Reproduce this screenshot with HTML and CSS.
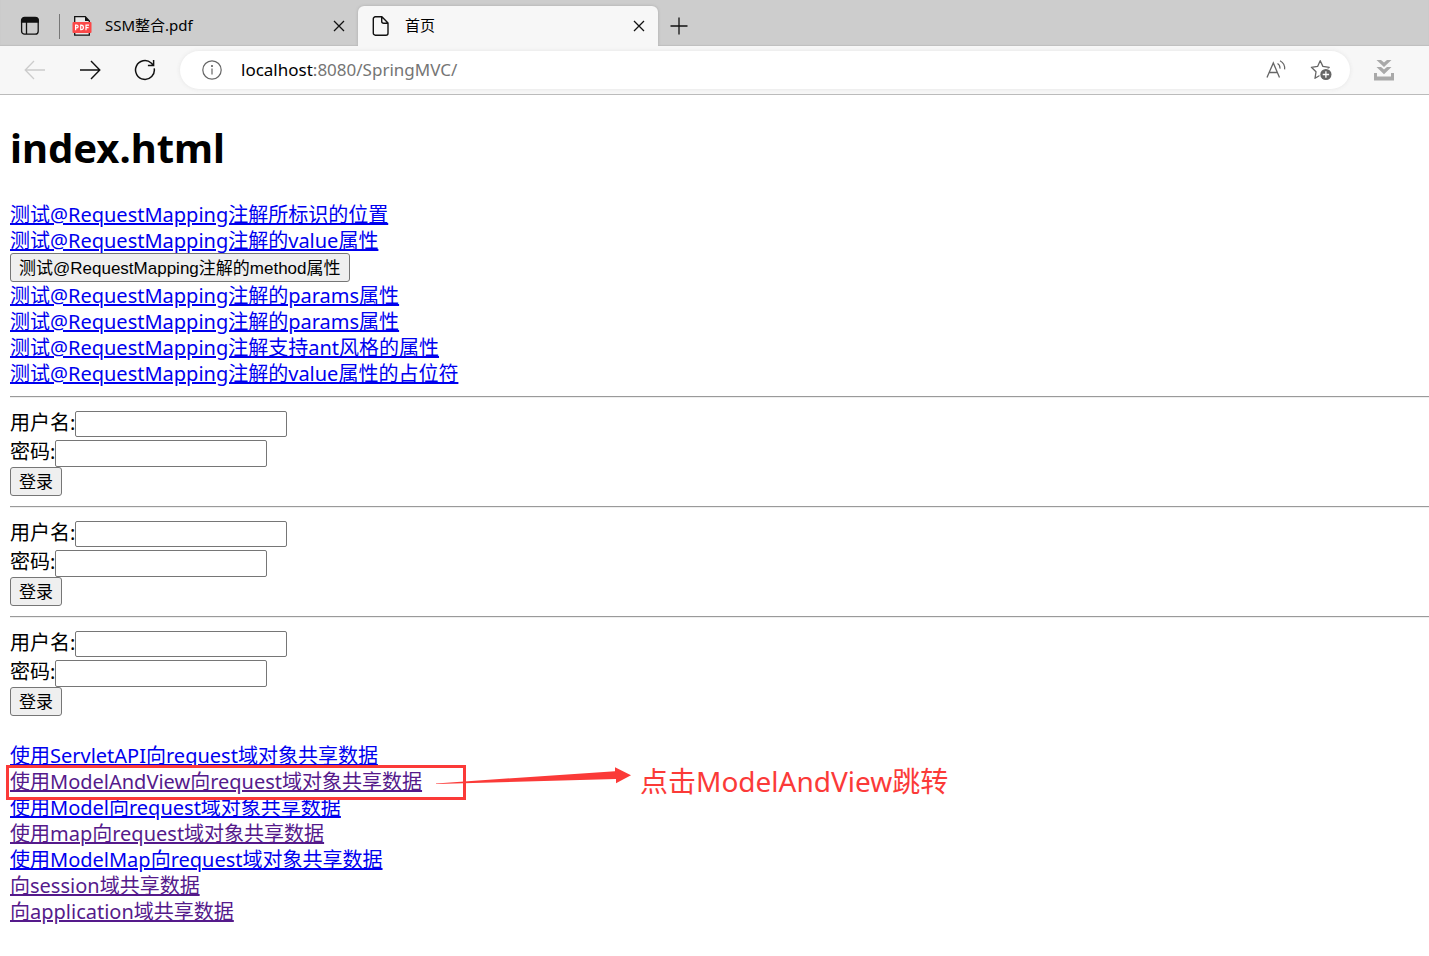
FILE: index.html
```html
<!DOCTYPE html>
<html lang="zh-CN">
<head>
<meta charset="utf-8">
<title>首页</title>
<link rel="stylesheet" href="styles.css">
</head>
<body>
<header class="browser">
  <div class="tabs">
    <button class="icon-button tab-menu" aria-label="标签操作菜单">
      <svg width="20" height="20" viewBox="0 0 20 20" fill="none" stroke="#111" stroke-width="1.3"><rect x="1.6" y="1.6" width="16.6" height="16.6" rx="3"/><path d="M1.6 6V4.5a3 3 0 0 1 3-3h10.6a3 3 0 0 1 3 3V6z" fill="#111"/><path d="M6.5 6v12"/></svg>
    </button>
    <div class="tab">
      <svg width="20" height="20" viewBox="0 0 20 20"><path d="M2.7.7h10.6L17.3 5v14.2H2.7z" fill="#e8e8e8" stroke="#111" stroke-width="1.3"/><path d="M13 .7V5h4.3z" fill="#111"/><rect x=".5" y="6" width="19" height="11" rx="1" fill="#fb4848"/><path d="M3.6 14.2V9.2h1.2a1.2 1.2 0 0 1 0 2.6H3.6M8.7 9.2v4.4h.5a2.2 2.2 0 0 0 0-4.4zM14 14.2V9.2H17M14 11.7h2.6" fill="none" stroke="#fff" stroke-width="1.2"/></svg>
      <span class="tab-title">SSM整合.pdf</span>
      <button class="icon-button" aria-label="关闭标签页"><svg width="12" height="12" viewBox="0 0 12 12" stroke="#111" stroke-width="1.3"><path d="M1 1l10 10M11 1L1 11"/></svg></button>
    </div>
    <div class="tab tab-active">
      <svg width="20" height="20" viewBox="0 0 20 20" fill="none" stroke="#111" stroke-width="1.4" stroke-linejoin="round"><path d="M3.3.8h6.6L16 6.9v10.3a2 2 0 0 1-2 2H3.3a2 2 0 0 1-2-2V2.8a2 2 0 0 1 2-2zM9.7.8v4.4a2 2 0 0 0 2 2H16"/></svg>
      <span class="tab-title">首页</span>
      <button class="icon-button" aria-label="关闭标签页"><svg width="12" height="12" viewBox="0 0 12 12" stroke="#111" stroke-width="1.3"><path d="M1 1l10 10M11 1L1 11"/></svg></button>
    </div>
    <button class="icon-button new-tab" aria-label="新建标签页"><svg width="18" height="18" viewBox="0 0 18 18" stroke="#111" stroke-width="1.3"><path d="M9 .5v17M.5 9h17"/></svg></button>
  </div>
  <div class="toolbar">
    <nav class="nav-buttons">
      <button class="icon-button" aria-label="后退"><svg width="22" height="20" viewBox="0 0 22 20" fill="none" stroke="#ccc" stroke-width="1.3"><path d="M21 10H1.5M10 1L1.2 10l8.8 9"/></svg></button>
      <button class="icon-button" aria-label="前进"><svg width="22" height="20" viewBox="0 0 22 20" fill="none" stroke="#111" stroke-width="1.4"><path d="M1 10h19.5M12 1l8.8 9-8.8 9"/></svg></button>
      <button class="icon-button" aria-label="刷新"><svg width="22" height="22" viewBox="0 0 22 22" fill="none" stroke="#111" stroke-width="1.5"><path d="M20.2 9.4A9.4 9.4 0 1 1 17.2 4l1.9 2M19.6 1v5.5h-5.7"/></svg></button>
    </nav>
    <div class="address">
      <svg width="20" height="20" viewBox="0 0 20 20" fill="none" stroke="#666" stroke-width="1.2"><circle cx="10" cy="10" r="9.2"/><path d="M10 8.5v6"/><circle cx="10" cy="6" r=".5" fill="#666"/></svg>
      <span class="url"><span class="host">localhost</span>:8080/SpringMVC/</span>
      <button class="icon-button" aria-label="朗读此页内容"><svg width="20" height="20" viewBox="0 0 20 20" fill="none" stroke="#666" stroke-width="1.3"><path d="M1 17.5L7.3 3l6.2 14.5M3.3 12.5h8"/><path d="M11.5 3.6c1.8 1 2.6 2.7 2.5 5M14 .8c3.4 1.8 5 4.6 4.6 8.6" stroke-width="1.2"/></svg></button>
      <button class="icon-button" aria-label="添加到收藏夹"><svg width="22" height="22" viewBox="0 0 22 22"><path d="M10.2 1.7l2.7 5.7 6.3.9-4.6 4.4L9.7 16.5 5 19.3l1-6.5L1.4 8.3l6.2-.9z" fill="none" stroke="#666" stroke-width="1.3" stroke-linejoin="round"/><circle cx="15.9" cy="15.5" r="6.6" fill="#fff"/><circle cx="15.9" cy="15.5" r="5.6" fill="#666"/><path d="M15.9 12.3v6.4M12.7 15.5h6.4" stroke="#fff" stroke-width="1.3"/></svg></button>
    </div>
    <button class="icon-button" aria-label="下载"><svg width="20" height="21" viewBox="0 0 20 21" fill="#a9a9a9"><path d="M2.5 0h4.5l3 2.6L13 0h4.5L10 7zM2.5 7h4.5l3 2.6L13 7h4.5L10 14.3zM0 13h3v3.5h14V13h3v7.5H0z"/></svg></button>
  </div>
</header>
<main class="page">
  <h1 class="heading">index.html</h1>
  <div class="row"><a class="link" href="#">测试@RequestMapping注解所标识的位置</a></div>
  <div class="row"><a class="link" href="#">测试@RequestMapping注解的value属性</a></div>
  <form class="method-form"><button class="button" type="button">测试@RequestMapping注解的method属性</button></form>
  <div class="row"><a class="link" href="#">测试@RequestMapping注解的params属性</a></div>
  <div class="row"><a class="link" href="#">测试@RequestMapping注解的params属性</a></div>
  <div class="row"><a class="link" href="#">测试@RequestMapping注解支持ant风格的属性</a></div>
  <div class="row"><a class="link" href="#">测试@RequestMapping注解的value属性的占位符</a></div>
  <hr class="rule">
  <form class="login">
    <div class="field"><label for="user1">用户名:</label><input class="input" id="user1" type="text"></div>
    <div class="field"><label for="pass1">密码:</label><input class="input" id="pass1" type="password"></div>
    <button class="button" type="button">登录</button>
  </form>
  <hr class="rule">
  <form class="login">
    <div class="field"><label for="user2">用户名:</label><input class="input" id="user2" type="text"></div>
    <div class="field"><label for="pass2">密码:</label><input class="input" id="pass2" type="password"></div>
    <button class="button" type="button">登录</button>
  </form>
  <hr class="rule">
  <form class="login">
    <div class="field"><label for="user3">用户名:</label><input class="input" id="user3" type="text"></div>
    <div class="field"><label for="pass3">密码:</label><input class="input" id="pass3" type="password"></div>
    <button class="button" type="button">登录</button>
  </form>
  <div class="share-links">
    <div class="row"><a class="link" href="#">使用ServletAPI向request域对象共享数据</a></div>
    <div class="row marked">
      <a class="link seen" href="#">使用ModelAndView向request域对象共享数据</a>
      <div class="note">
        <div class="note-box"></div>
        <svg class="note-arrow" width="196" height="18" viewBox="0 0 196 18" fill="#fb3a38"><path d="M0 16.4L179 4.2V.2L195 8.2l-15 8v-4.2L0 17z"/></svg>
        <span class="note-text">点击ModelAndView跳转</span>
      </div>
    </div>
    <div class="row"><a class="link" href="#">使用Model向request域对象共享数据</a></div>
    <div class="row"><a class="link seen" href="#">使用map向request域对象共享数据</a></div>
    <div class="row"><a class="link" href="#">使用ModelMap向request域对象共享数据</a></div>
    <div class="row"><a class="link seen" href="#">向session域共享数据</a></div>
    <div class="row"><a class="link seen" href="#">向application域共享数据</a></div>
  </div>
</main>
</body>
</html>
```
FILE: styles.css
```css
* { box-sizing: border-box; }

body {
  margin: 0;
  background: #fff;
  color: #000;
  font: 20px/26px "Noto Sans", "Noto Sans CJK SC", sans-serif;
}

svg { display: block; flex: none; }

.icon-button {
  flex: none;
  padding: 0;
  border: 0;
  background: none;
}

.tabs {
  display: flex;
  align-items: stretch;
  height: 46px;
  padding-left: 20px;
  background: #cdcdcd;
  box-shadow: inset 0 -1px 1px #bfbfbf;
}

.tab-menu { width: 38px; padding-top: 6px; }

.tab {
  display: flex;
  align-items: center;
  width: 300px;
  margin-top: 6px;
  padding: 0 14px;
  gap: 13px;
  font-size: 15px;
}

.tab:not(.tab-active)::before {
  content: "";
  width: 1px;
  height: 25px;
  margin: 0 -1px 0 -13px;
  background: #777;
}

.tab-active {
  border-radius: 6px 6px 0 0;
  background: #f7f7f7;
  box-shadow: 0 0 3px #aaa;
  clip-path: inset(-4px -4px 0 -4px);
}

.tab-title { flex: 1; padding-bottom: 2px; }
.tab .icon-button { margin-right: -1px; }
.new-tab { padding: 6px 12px 0; }

.toolbar {
  display: flex;
  align-items: center;
  height: 49px;
  padding: 0 35px 0 24px;
  border-bottom: 1px solid #bbb;
  background: #f7f7f7;
}

.nav-buttons { display: flex; align-items: center; gap: 33px; }

.address {
  display: flex;
  flex: 1;
  align-items: center;
  height: 38px;
  margin: 0 24px;
  padding: 0 18px 0 22px;
  gap: 24px;
  border-radius: 19px;
  background: #fff;
  box-shadow: 0 0 4px #e4e4e4;
}

.url { flex: 1; margin-left: -5px; color: #757575; font-size: 17px; }
.host { color: #000; }

.page { padding: 24px 0 24px 10px; }

.heading {
  margin: 0 0 24px;
  font-size: 40px;
  line-height: 58px;
}

.row { height: 26px; line-height: 28px; }
.link { color: #00e; text-decoration-thickness: 2px; }
.seen { color: #551a8b; }

.method-form { display: flex; }

.button {
  display: block;
  height: 29px;
  padding: 2px 8px 0;
  border: 1px solid #767676;
  border-radius: 3px;
  background: #efefef;
  color: #000;
  font: 17px/25px "Liberation Sans", "Noto Sans CJK SC", sans-serif;
}

.rule {
  height: 2px;
  margin: 10px 0;
  border: 0;
  border-top: 1px solid #9a9a9a;
  border-bottom: 1px solid #eee;
}

.field { display: flex; align-items: flex-end; height: 29px; }
.field label { line-height: 29px; }
.field + .field { height: 30px; }
.field + .field label { line-height: 31px; }

.input {
  width: 212px;
  height: 26px;
  padding: 1px 2px;
  border: 1px solid #767676;
  border-radius: 2px;
  background: #fff;
  font: 17px "Liberation Sans", sans-serif;
}

.field + .field .input { height: 27px; }

.share-links { margin-top: 26px; }
.marked { position: relative; }

.note {
  position: absolute;
  top: -3px;
  left: -4px;
  color: #fb3a38;
}

.note-box {
  width: 460px;
  height: 35px;
  border: 3px solid #fb3a38;
}

.note-arrow { position: absolute; top: 2px; left: 430px; }

.note-text {
  position: absolute;
  top: -2px;
  left: 634px;
  font-size: 28px;
  line-height: 36px;
  white-space: nowrap;
}
```
